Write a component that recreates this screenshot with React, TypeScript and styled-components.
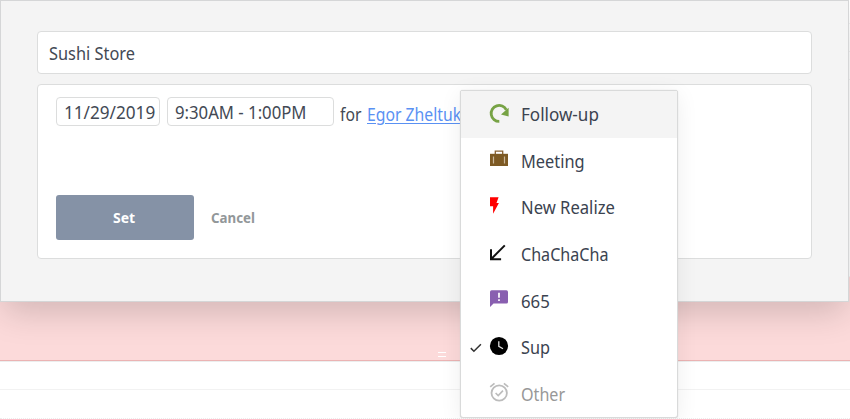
import React from 'react';
import styled, { createGlobalStyle, css } from 'styled-components';

const GlobalStyle = createGlobalStyle`
  * { box-sizing: border-box; }
  body { margin: 0; background: #fff; overflow: hidden; font-family: 'Noto Sans', 'Open Sans', sans-serif; color: #434954; }
`;

const Page = styled.main`
  position: relative;
  height: 419px;
  overflow: hidden;
  background: #fff;
`;

const Calendar = styled.div`
  display: grid;
  grid-template-rows: 24px 28px 28px 197px 84px 29px 29px;
  height: 419px;
`;

const Slot = styled.div<{ $dotted?: boolean }>`
  border-bottom: 1px ${p => (p.$dotted ? 'dotted #ededed' : 'solid #f2f2f2')};
`;

const BusySlot = styled.div`
  display: flex;
  align-items: flex-end;
  justify-content: center;
  padding: 0 0 3px 33px;
  background: #fcdada;
  border-bottom: 1px solid #ebb3b3;
  box-shadow: 0 1px 0 #eceeee;
`;

const Grip = styled.span`
  width: 8px;
  height: 5px;
  border: solid #fff;
  border-width: 1px 0;
`;

const Dialog = styled.section`
  position: absolute;
  top: 0;
  left: 0;
  width: 849px;
  height: 302px;
  display: flex;
  flex-direction: column;
  gap: 9px;
  padding: 30px 36px 42px;
  background: #f4f4f4;
  border: 1px solid #d5d6d7;
  box-shadow: 0 14px 32px -4px rgba(0, 0, 0, 0.17);
`;

const fieldFrame = css`
  background: #fff;
  border: 1px solid #dcdddd;
  border-radius: 4px;
`;

const TitleField = styled.div`
  ${fieldFrame}
  flex: none;
  display: flex;
  align-items: center;
  height: 43px;
  padding-left: 11px;
`;

const Details = styled.div`
  ${fieldFrame}
  flex: 1;
  display: flex;
  flex-direction: column;
  justify-content: space-between;
  margin-top: 1px;
  padding: 12px 18px 18px;
`;

const Row = styled.div`
  display: flex;
  align-items: flex-start;
  white-space: nowrap;
`;

const SmallField = styled.div<{ $width: number }>`
  ${fieldFrame}
  display: flex;
  align-items: center;
  width: ${p => p.$width}px;
  height: 29px;
  margin-right: 7px;
  padding-left: 7px;
`;

const Label = styled.span<{ $scale?: number; $muted?: boolean }>`
  display: inline-block;
  font-size: 17.5px;
  line-height: 24px;
  white-space: nowrap;
  transform: scaleX(${p => p.$scale ?? 0.9});
  transform-origin: left center;
  color: ${p => (p.$muted ? '#989898' : 'inherit')};
`;

const Assignee = styled.div`
  display: grid;
  grid-template-columns: 27px auto;
  margin: 5px 0 0 -1px;
`;

const Person = styled(Label)`
  color: #5a91f3;
  text-decoration: underline;
  text-decoration-thickness: 1px;
  text-underline-offset: 2px;
`;

const Button = styled.button<{ $primary?: boolean }>`
  height: 45px;
  width: ${p => (p.$primary ? '138px' : 'auto')};
  margin: 0;
  padding: 0 ${p => (p.$primary ? '2px 0 0' : '17px')};
  border: 0;
  border-radius: 3px;
  background: ${p => (p.$primary ? '#8592a6' : 'transparent')};
  color: ${p => (p.$primary ? '#fff' : '#929799')};
  font: 700 14px 'Noto Sans', sans-serif;
`;

const ButtonText = styled.span<{ $scale: number; $origin: string }>`
  display: inline-block;
  transform: scaleX(${p => p.$scale});
  transform-origin: ${p => p.$origin} center;
`;

const Menu = styled.ul`
  position: absolute;
  top: 90px;
  left: 460px;
  width: 218px;
  height: 328px;
  margin: 0;
  padding: 0;
  list-style: none;
  display: grid;
  grid-template-rows: repeat(7, 46.6px);
  background: #fff;
  border: 1px solid #d9dada;
  border-radius: 3px;
  box-shadow: 0 0 1px #c5c5c5, 0 4px 22px rgba(0, 0, 0, 0.07);
`;

const MenuItem = styled.li<{ $active?: boolean }>`
  display: grid;
  grid-template-columns: 19px 32px 1fr;
  align-items: center;
  padding: 0 0 0 9px;
  color: #3b4350;
  background: ${p => (p.$active ? '#f4f4f4' : 'transparent')};
`;

const Icon = styled.svg`
  display: block;
  overflow: visible;
  width: 20px;
  height: 20px;
  margin-top: -3px;
`;

const Follow = () => (
  <Icon viewBox="0 0 20 20">
    <path d="M10.3 18.4A8 8 0 1 1 17.3 6.8" fill="none" stroke="#77a345" strokeWidth="2.8" />
    <path d="M19.6 4.8V13.4L12 11.6z" fill="#77a345" />
  </Icon>
);

const Case = () => (
  <Icon viewBox="0 0 20 20">
    <path d="M6.3 5V2.1h7.4V5" fill="none" stroke="#866032" strokeWidth="1.3" />
    <path d="M1 4.8h18V17H1z" fill="#7d5a24" />
    <path d="M4.5 7.5v7M15.5 7.5v7" stroke="#c9b699" strokeWidth="1.2" />
  </Icon>
);

const Bolt = () => (
  <Icon viewBox="0 0 20 20">
    <path d="M1 1.2h8.6L7.5 7h2.4L4.1 17.7V10.3H1z" fill="#f00" />
  </Icon>
);

const Arrow = () => (
  <Icon viewBox="0 0 20 20">
    <path d="M15.8 2.4 2.5 15.7M2 6.2v10.1h10.1" fill="none" stroke="#111" strokeWidth="2" />
  </Icon>
);

const Note = () => (
  <Icon viewBox="0 0 20 20">
    <path d="M2.6 1.3h14.8q1.6 0 1.6 1.6V13q0 1.6-1.6 1.6H4.5L1 17.9V2.9q0-1.6 1.6-1.6z" fill="#895fb0" />
    <path d="M10 3.8v4.9M10 10.3V12" stroke="#fff" strokeWidth="1.7" />
  </Icon>
);

const Clock = () => (
  <Icon viewBox="0 0 20 20">
    <circle cx="10" cy="10" r="9.1" fill="#000" />
    <path d="M9.8 5.3v5l4.2 2.5" fill="none" stroke="#ddd" strokeWidth="1.3" />
  </Icon>
);

const Alarm = () => (
  <Icon viewBox="0 0 20 20" fill="none" stroke="#bcbcbc">
    <circle cx="10.2" cy="11" r="7.7" strokeWidth="1.8" />
    <path d="m1.2 4.8 4.3-3.5M19.2 4.8l-4.3-3.5" strokeWidth="1.7" />
    <path d="m6.6 11 2.6 2.5 4.8-4.9" strokeWidth="1.6" />
  </Icon>
);

const Check = () => (
  <svg width="12" height="10" viewBox="0 0 12 10">
    <path d="m.8 5.1 3.1 3.1 7-7" fill="none" stroke="#333" strokeWidth="1.5" />
  </svg>
);

const options = [
  { name: 'Follow-up', icon: <Follow />, scale: 0.975, active: true },
  { name: 'Meeting', icon: <Case />, scale: 0.935 },
  { name: 'New Realize', icon: <Bolt />, scale: 0.95 },
  { name: 'ChaChaCha', icon: <Arrow />, scale: 0.92 },
  { name: '665', icon: <Note />, scale: 0.96 },
  { name: 'Sup', icon: <Clock />, scale: 0.93, checked: true },
  { name: 'Other', icon: <Alarm />, scale: 0.92, muted: true },
];

export default function App() {
  return (
    <Page>
      <GlobalStyle />
      <Calendar>
        <Slot /><Slot /><Slot /><Slot />
        <BusySlot><Grip /></BusySlot>
        <Slot /><Slot $dotted />
      </Calendar>
      <Dialog>
        <TitleField><Label $scale={0.935}>Sushi Store</Label></TitleField>
        <Details>
          <Row>
            <SmallField $width={104}><Label $scale={0.98}>11/29/2019</Label></SmallField>
            <SmallField $width={167}><Label $scale={0.955}>9:30AM - 1:00PM</Label></SmallField>
            <Assignee><Label>for</Label><Person>Egor Zheltukhin</Person></Assignee>
          </Row>
          <Row>
            <Button $primary><ButtonText $scale={1} $origin="center">Set</ButtonText></Button>
            <Button><ButtonText $scale={0.95} $origin="left">Cancel</ButtonText></Button>
          </Row>
        </Details>
      </Dialog>
      <Menu>
        {options.map(o => (
          <MenuItem key={o.name} $active={o.active}>
            <span>{o.checked && <Check />}</span>
            {o.icon}
            <div><Label $scale={o.scale} $muted={o.muted}>{o.name}</Label></div>
          </MenuItem>
        ))}
      </Menu>
    </Page>
  );
}
